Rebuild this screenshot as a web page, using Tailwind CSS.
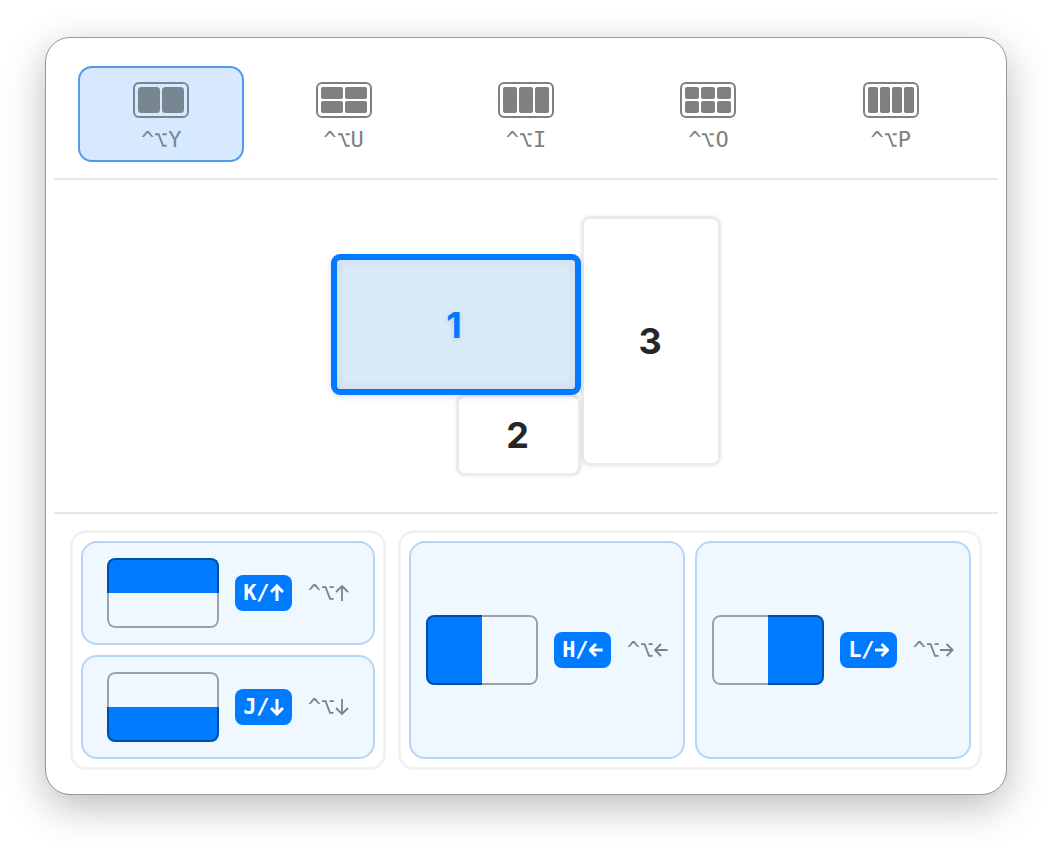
<!DOCTYPE html>
<html lang="en">
<head>
<meta charset="utf-8">
<meta name="viewport" content="width=device-width, initial-scale=1">
<title>Window layouts</title>
<script src="https://cdn.jsdelivr.net/npm/@tailwindcss/browser@4"></script>
</head>
<body class="min-h-screen bg-white px-[46px] py-[38px]">
<svg class="hidden" aria-hidden="true">
  <symbol id="option" viewBox="0 0 14 18"><path d="M1 3.2H4.6L9 14.8H12.6M8.6 3.2H12.8"/></symbol>
  <symbol id="up" viewBox="0 0 14 18"><path d="M7 17V1.6M1 8L7 2L13 8"/></symbol>
  <symbol id="down" viewBox="0 0 14 18"><path d="M7 1V16.4M1 10L7 16L13 10"/></symbol>
  <symbol id="left" viewBox="0 0 14 18"><path d="M13.6 9H1.2M7 3L1 9L7 15"/></symbol>
  <symbol id="right" viewBox="0 0 14 18"><path d="M0 9H12.4M6.6 3L12.6 9L6.6 15"/></symbol>
</svg>
<main class="rounded-[24px] bg-white px-2 pt-5 pb-6 outline outline-[#999999] shadow-[0_12px_42px_rgba(0,0,0,0.28)] font-['DejaVu_Sans_Mono',monospace] text-[22px] leading-7 text-[#808080]">
  <nav class="grid grid-cols-5 px-4 pt-2 pb-4" aria-label="Layouts">
    <div class="px-2">
      <button type="button" aria-pressed="true" class="flex h-24 w-full flex-col items-center gap-2 rounded-[14px] border-2 border-[#519be9] bg-[#d6e9fe] pt-3.5 text-[#788691]">
        <svg class="h-9 w-14 shrink-0" viewBox="0 0 56 36" fill="currentColor"><rect x="1" y="1" width="54" height="34" rx="5" fill="none" stroke="currentColor" stroke-width="2"/><rect x="5" y="5" width="22" height="26" rx="3.5"/><rect x="29" y="5" width="22" height="26" rx="3.5"/></svg>
        <span class="flex items-center">^<svg class="h-[18px] w-3.5" fill="none" stroke="currentColor" stroke-width="2" role="img" aria-label="Option"><use href="#option"/></svg>Y</span>
      </button>
    </div>
    <div class="px-2">
      <button type="button" class="flex h-24 w-full flex-col items-center gap-2 rounded-[14px] border-2 border-transparent pt-3.5">
        <svg class="h-9 w-14 shrink-0" viewBox="0 0 56 36" fill="currentColor"><rect x="1" y="1" width="54" height="34" rx="5" fill="none" stroke="currentColor" stroke-width="2"/><rect x="5" y="5" width="22" height="12" rx="1.8"/><rect x="29" y="5" width="22" height="12" rx="1.8"/><rect x="5" y="19" width="22" height="12" rx="1.8"/><rect x="29" y="19" width="22" height="12" rx="1.8"/></svg>
        <span class="flex items-center">^<svg class="h-[18px] w-3.5" fill="none" stroke="currentColor" stroke-width="2" role="img" aria-label="Option"><use href="#option"/></svg>U</span>
      </button>
    </div>
    <div class="px-2">
      <button type="button" class="flex h-24 w-full flex-col items-center gap-2 rounded-[14px] border-2 border-transparent pt-3.5">
        <svg class="h-9 w-14 shrink-0" viewBox="0 0 56 36" fill="currentColor"><rect x="1" y="1" width="54" height="34" rx="5" fill="none" stroke="currentColor" stroke-width="2"/><rect x="5" y="5" width="14" height="26" rx="2"/><rect x="21" y="5" width="14" height="26" rx="2"/><rect x="37" y="5" width="14" height="26" rx="2"/></svg>
        <span class="flex items-center">^<svg class="h-[18px] w-3.5" fill="none" stroke="currentColor" stroke-width="2" role="img" aria-label="Option"><use href="#option"/></svg>I</span>
      </button>
    </div>
    <div class="px-2">
      <button type="button" class="flex h-24 w-full flex-col items-center gap-2 rounded-[14px] border-2 border-transparent pt-3.5">
        <svg class="h-9 w-14 shrink-0" viewBox="0 0 56 36" fill="currentColor"><rect x="1" y="1" width="54" height="34" rx="5" fill="none" stroke="currentColor" stroke-width="2"/><rect x="5" y="5" width="14" height="12" rx="2"/><rect x="21" y="5" width="14" height="12" rx="2"/><rect x="37" y="5" width="14" height="12" rx="2"/><rect x="5" y="19" width="14" height="12" rx="2"/><rect x="21" y="19" width="14" height="12" rx="2"/><rect x="37" y="19" width="14" height="12" rx="2"/></svg>
        <span class="flex items-center">^<svg class="h-[18px] w-3.5" fill="none" stroke="currentColor" stroke-width="2" role="img" aria-label="Option"><use href="#option"/></svg>O</span>
      </button>
    </div>
    <div class="px-2">
      <button type="button" class="flex h-24 w-full flex-col items-center gap-2 rounded-[14px] border-2 border-transparent pt-3.5">
        <svg class="h-9 w-14 shrink-0" viewBox="0 0 56 36" fill="currentColor"><rect x="1" y="1" width="54" height="34" rx="5" fill="none" stroke="currentColor" stroke-width="2"/><rect x="5" y="5" width="10" height="26" rx="1.8"/><rect x="17" y="5" width="10" height="26" rx="1.8"/><rect x="29" y="5" width="10" height="26" rx="1.8"/><rect x="41" y="5" width="10" height="26" rx="1.8"/></svg>
        <span class="flex items-center">^<svg class="h-[18px] w-3.5" fill="none" stroke="currentColor" stroke-width="2" role="img" aria-label="Option"><use href="#option"/></svg>P</span>
      </button>
    </div>
  </nav>

  <!-- Display arrangement -->
  <section class="flex justify-center border-y-2 border-[#e6e6e6] py-9 font-[Inter,sans-serif] text-[36px] font-bold text-[#262626]" aria-label="Displays">
    <div class="relative h-[260px] w-[390px]">
      <button type="button" class="absolute top-0 left-[250px] h-[250px] w-[140px] rounded-[9px] border-3 border-[#ebebeb] bg-white pr-0.5 shadow-[0_0_4px_rgba(0,0,0,0.08)]">3</button>
      <button type="button" class="absolute top-[178px] left-[125px] h-[82px] w-[125px] rounded-[9px] border-3 border-[#ebebeb] bg-white pr-0.5 shadow-[0_0_4px_rgba(0,0,0,0.08)]">2</button>
      <button type="button" aria-pressed="true" class="absolute top-[38px] left-0 h-[141px] w-[250px] rounded-[9px] border-6 border-[#007aff] bg-[#dbeaf9] pr-1 text-[#007aff] shadow-[0_2px_6px_rgba(0,0,0,0.12),inset_0_0_12px_rgba(0,0,0,0.08)] text-shadow-[0_2px_6px_rgba(0,0,0,0.12)]">1</button>
    </div>
  </section>

  <section class="grid grid-cols-[316fr_584fr] gap-3 px-4 pt-4" aria-label="Regions">
    <div class="grid gap-2.5 rounded-[16px] border-3 border-[#f2f2f2] p-2">
      <button type="button" class="flex h-26 items-center justify-center gap-4 rounded-[16px] border-2 border-[#b5d6f8] bg-[#eff7ff]">
        <span class="relative h-[70px] w-28 overflow-hidden rounded-lg"><span class="block h-1/2 bg-[#007aff]"></span><span class="absolute inset-0 rounded-lg border-2 border-black/35"></span></span>
        <kbd class="flex items-center rounded-lg bg-[#007aff] px-2 py-1 font-['DejaVu_Sans_Mono',monospace] font-bold text-white">K/<svg class="h-[18px] w-3.5" fill="none" stroke="currentColor" stroke-width="3" role="img" aria-label="Up"><use href="#up"/></svg></kbd>
        <span class="flex items-center">^<svg class="h-[18px] w-3.5" fill="none" stroke="currentColor" stroke-width="1.8" role="img" aria-label="Option"><use href="#option"/></svg><svg class="h-[18px] w-3.5" fill="none" stroke="currentColor" stroke-width="1.8" role="img" aria-label="Up"><use href="#up"/></svg></span>
      </button>
      <button type="button" class="flex h-26 items-center justify-center gap-4 rounded-[16px] border-2 border-[#b5d6f8] bg-[#eff7ff]">
        <span class="relative flex h-[70px] w-28 flex-col justify-end overflow-hidden rounded-lg"><span class="block h-1/2 bg-[#007aff]"></span><span class="absolute inset-0 rounded-lg border-2 border-black/35"></span></span>
        <kbd class="flex items-center rounded-lg bg-[#007aff] px-2 py-1 font-['DejaVu_Sans_Mono',monospace] font-bold text-white">J/<svg class="h-[18px] w-3.5" fill="none" stroke="currentColor" stroke-width="3" role="img" aria-label="Down"><use href="#down"/></svg></kbd>
        <span class="flex items-center">^<svg class="h-[18px] w-3.5" fill="none" stroke="currentColor" stroke-width="1.8" role="img" aria-label="Option"><use href="#option"/></svg><svg class="h-[18px] w-3.5" fill="none" stroke="currentColor" stroke-width="1.8" role="img" aria-label="Down"><use href="#down"/></svg></span>
      </button>
    </div>
    <div class="grid grid-cols-2 gap-2.5 rounded-[16px] border-3 border-[#f2f2f2] p-2">
      <button type="button" class="flex items-center justify-center gap-4 rounded-[16px] border-2 border-[#b5d6f8] bg-[#eff7ff]">
        <span class="relative flex h-[70px] w-28 overflow-hidden rounded-lg"><span class="w-1/2 bg-[#007aff]"></span><span class="absolute inset-0 rounded-lg border-2 border-black/35"></span></span>
        <kbd class="flex items-center rounded-lg bg-[#007aff] px-2 py-1 font-['DejaVu_Sans_Mono',monospace] font-bold text-white">H/<svg class="h-[18px] w-3.5" fill="none" stroke="currentColor" stroke-width="3" role="img" aria-label="Left"><use href="#left"/></svg></kbd>
        <span class="flex items-center">^<svg class="h-[18px] w-3.5" fill="none" stroke="currentColor" stroke-width="1.8" role="img" aria-label="Option"><use href="#option"/></svg><svg class="h-[18px] w-3.5" fill="none" stroke="currentColor" stroke-width="1.8" role="img" aria-label="Left"><use href="#left"/></svg></span>
      </button>
      <button type="button" class="flex items-center justify-center gap-4 rounded-[16px] border-2 border-[#b5d6f8] bg-[#eff7ff]">
        <span class="relative flex h-[70px] w-28 justify-end overflow-hidden rounded-lg"><span class="w-1/2 bg-[#007aff]"></span><span class="absolute inset-0 rounded-lg border-2 border-black/35"></span></span>
        <kbd class="flex items-center rounded-lg bg-[#007aff] px-2 py-1 font-['DejaVu_Sans_Mono',monospace] font-bold text-white">L/<svg class="h-[18px] w-3.5" fill="none" stroke="currentColor" stroke-width="3" role="img" aria-label="Right"><use href="#right"/></svg></kbd>
        <span class="flex items-center">^<svg class="h-[18px] w-3.5" fill="none" stroke="currentColor" stroke-width="1.8" role="img" aria-label="Option"><use href="#option"/></svg><svg class="h-[18px] w-3.5" fill="none" stroke="currentColor" stroke-width="1.8" role="img" aria-label="Right"><use href="#right"/></svg></span>
      </button>
    </div>
  </section>
</main>
</body>
</html>
